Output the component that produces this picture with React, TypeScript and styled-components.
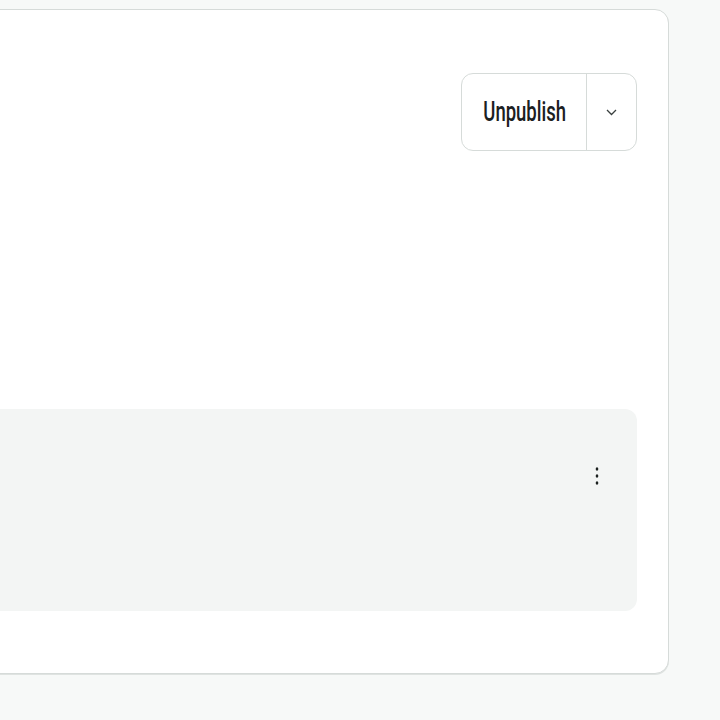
import React from "react";
import styled, { createGlobalStyle } from "styled-components";

const Global = createGlobalStyle`
  html, body { margin: 0; padding: 0; background: #f7f9f8; }
  body { font-family: Roboto, "Liberation Sans", sans-serif; overflow: hidden; }
`;

const Page = styled.div`
  width: 720px;
  height: 720px;
  padding: 9px 51px 0 0;
  box-sizing: border-box;
  overflow: hidden;
  display: flex;
`;

const Card = styled.section`
  margin-left: -60px;
  flex: 1;
  height: 665px;
  box-sizing: border-box;
  background: #ffffff;
  border: 1px solid #d6dbd9;
  border-radius: 14px;
  box-shadow: 0 1px 0 #dfe3e1;
  padding: 63px 31px 0 0;
  display: flex;
  flex-direction: column;
`;

const Header = styled.div`
  display: flex;
  justify-content: flex-end;
`;

const SplitButton = styled.div`
  display: flex;
  height: 78px;
  box-sizing: border-box;
  border: 1px solid #d6dbd9;
  border-radius: 12px;
  background: #fff;
  overflow: hidden;
`;

const MainAction = styled.button`
  width: 125px;
  border: 0;
  border-right: 1px solid #d6dbd9;
  background: transparent;
  display: flex;
  align-items: center;
  justify-content: center;
  padding: 0 0 0 2px;
  cursor: pointer;
`;

const Label = styled.span`
  display: inline-block;
  font-family: Roboto, sans-serif;
  font-size: 28px;
  font-weight: 500;
  color: #1b201f;
  transform: scaleX(0.66);
  margin-top: -2px;
`;

const Toggle = styled.button`
  width: 49px;
  border: 0;
  background: transparent;
  display: flex;
  align-items: center;
  justify-content: center;
  padding: 0;
  color: #3a403f;
  cursor: pointer;
`;

const Panel = styled.div`
  margin-top: 258px;
  height: 202px;
  background: #f3f5f4;
  border-radius: 12px;
  display: flex;
  justify-content: flex-end;
  padding: 56px 34px 0 0;
  box-sizing: border-box;
`;

const MenuButton = styled.button`
  width: 12px;
  height: 22px;
  border: 0;
  background: transparent;
  padding: 0;
  display: flex;
  align-items: center;
  justify-content: center;
  color: #1b201f;
`;

export default function App() {
  return (
    <>
      <Global />
      <Page>
        <Card>
          <Header>
            <SplitButton>
              <MainAction>
                <Label>Unpublish</Label>
              </MainAction>
              <Toggle aria-label="More actions">
                <svg width="11" height="7" viewBox="0 0 11 7" fill="none">
                  <path d="M1 1l4.5 4.5L10 1" stroke="currentColor" strokeWidth="1.3" />
                </svg>
              </Toggle>
            </SplitButton>
          </Header>
          <Panel>
            <MenuButton aria-label="Options">
              <svg width="4" height="20" viewBox="0 0 4 20">
                <ellipse cx="2" cy="3" rx="1.3" ry="1.7" fill="currentColor" />
                <ellipse cx="2" cy="10" rx="1.3" ry="1.7" fill="currentColor" />
                <ellipse cx="2" cy="17" rx="1.3" ry="1.7" fill="currentColor" />
              </svg>
            </MenuButton>
          </Panel>
        </Card>
      </Page>
    </>
  );
}
